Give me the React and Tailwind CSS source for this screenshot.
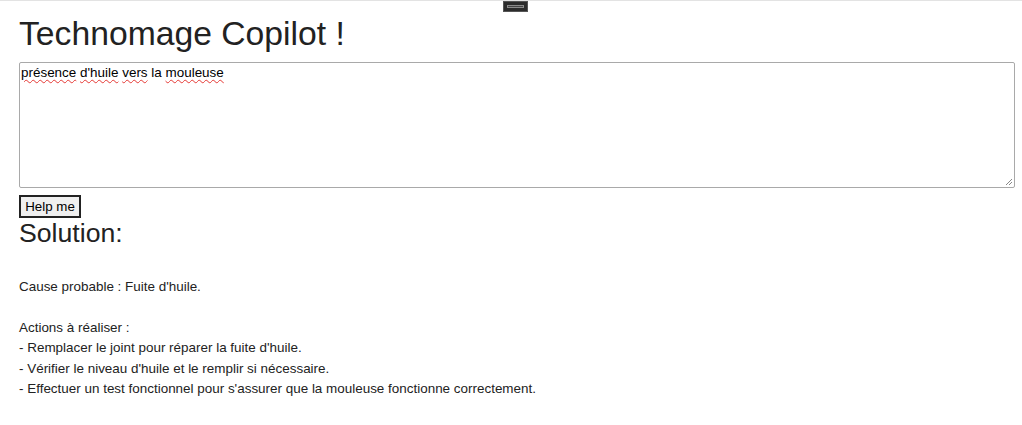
const misspelled = (w) => (
  <span className="underline decoration-wavy decoration-[#e53935] decoration-1 underline-offset-2">{w}</span>
);

const actions = [
  "- Remplacer le joint pour réparer la fuite d'huile.",
  "- Vérifier le niveau d'huile et le remplir si nécessaire.",
  "- Effectuer un test fonctionnel pour s'assurer que la mouleuse fonctionne correctement.",
];

export default function App() {
  return (
    <div className="relative min-h-[425px] bg-white border-t border-[#e3e3e3] font-['Liberation_Sans',Arial,sans-serif] text-[#222]">
      {/* little toggle handle at the top */}
      <div className="absolute left-[503px] top-0 w-[25px] h-[11px] bg-[#2b2b2b] border border-[#555] flex items-center justify-center">
        <div className="w-[17px] h-[3px] border border-[#8a8a8a] bg-[#444]" />
      </div>

      <div className="flex flex-col pl-[19px] pr-[7px]">
        <h1 className="text-[33.7px] leading-[38px] mt-[13px] mb-[10px]">Technomage Copilot !</h1>

        <div className="relative h-[126px] border border-[#a9a9a9] rounded-[2px] pl-[1px] pr-[2px] py-[2px] text-[13.45px] leading-[16px] text-black">
          {misspelled("présence")} {misspelled("d'huile")} {misspelled("vers")} la {misspelled("mouleuse")}
          <svg className="absolute right-[1px] bottom-[1px]" width="8" height="8" viewBox="0 0 8 8">
            <path d="M7 1 L1 7 M7 4 L4 7" stroke="#888" strokeWidth="1" />
          </svg>
        </div>

        <button className="self-start mt-[7px] h-[23px] w-[62px] bg-[#efefef] border-2 border-[#222] text-[13.33px] text-black leading-none">
          Help me
        </button>

        <h2 className="text-[26.67px] leading-[31px]">Solution:</h2>

        <div className="mt-[28px] text-[13.45px] leading-[20.4px] text-[#222]">
          <p>Cause probable : Fuite d'huile.</p>
          <p className="mt-[20.4px]">Actions à réaliser :</p>
          {actions.map((a, i) => (
            <p key={i}>{a}</p>
          ))}
        </div>
      </div>
    </div>
  );
}
